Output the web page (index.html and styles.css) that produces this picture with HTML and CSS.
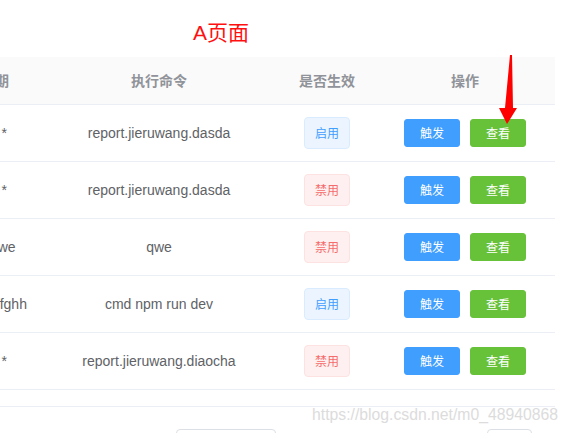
FILE: index.html
```html
<!DOCTYPE html>
<html lang="zh-CN">
<head>
<meta charset="utf-8">
<title>A页面</title>
<link rel="stylesheet" href="styles.css">
</head>
<body>
<div class="page">
  <div class="title">A页面</div>
  <div class="tbl-wrap">
    <table class="tbl">
      <colgroup>
        <col class="c1"><col class="c2"><col class="c3"><col class="c4">
      </colgroup>
      <thead>
        <tr><th>执行周期</th><th>执行命令</th><th>是否生效</th><th>操作</th></tr>
      </thead>
      <tbody>
        <tr>
          <td>* * * * * *</td><td>report.jieruwang.dasda</td>
          <td><span class="tag on">启用</span></td>
          <td><div class="ops"><button class="btn blue">触发</button><button class="btn green">查看</button></div></td>
        </tr>
        <tr>
          <td>* * * * * *</td><td>report.jieruwang.dasda</td>
          <td><span class="tag off">禁用</span></td>
          <td><div class="ops"><button class="btn blue">触发</button><button class="btn green">查看</button></div></td>
        </tr>
        <tr>
          <td>qwqweqwe</td><td>qwe</td>
          <td><span class="tag off">禁用</span></td>
          <td><div class="ops"><button class="btn blue">触发</button><button class="btn green">查看</button></div></td>
        </tr>
        <tr>
          <td>asdfghhsdfghh</td><td>cmd npm run dev</td>
          <td><span class="tag on">启用</span></td>
          <td><div class="ops"><button class="btn blue">触发</button><button class="btn green">查看</button></div></td>
        </tr>
        <tr>
          <td>* * * * * *</td><td>report.jieruwang.diaocha</td>
          <td><span class="tag off">禁用</span></td>
          <td><div class="ops"><button class="btn blue">触发</button><button class="btn green">查看</button></div></td>
        </tr>
      </tbody>
    </table>
    <div class="scroll-space"></div>
  </div>
  <div class="pager">
    <div class="pbox wide"></div>
    <div class="pbox small"></div>
  </div>
  <div class="watermark">https://blog.csdn.net/m0_48940868</div>
  <svg class="arrow" width="30" height="80" viewBox="495 50 30 80">
    <polygon points="510,55 512,55 513,108 517,108 507,124 499,108 505,108" fill="#ff0000"/>
  </svg>
</div>
</body>
</html>
```
FILE: styles.css
```css
* { box-sizing: border-box; }
html, body { margin: 0; padding: 0; background: #fff; }
body {
  font-family: "Liberation Sans", "Noto Sans CJK SC", sans-serif;
  font-size: 14px;
  color: #606266;
  overflow: hidden;
  width: 568px;
  height: 433px;
}
.page { position: relative; width: 568px; height: 433px; overflow: hidden; }
.title {
  height: 57px;
  padding: 21px 0 0 193px;
  font-size: 21px;
  line-height: 24px;
  color: #ff1010;
  font-family: "Liberation Sans", "Noto Sans CJK SC", sans-serif;
}
.tbl-wrap { width: 555px; overflow: hidden; }
.tbl {
  margin-left: -77px;
  width: 632px;
  table-layout: fixed;
  border-collapse: collapse;
  border-spacing: 0;
}
.c1 { width: 116px; }
.c2 { width: 240px; }
.c3 { width: 96px; }
.c4 { width: 180px; }
.tbl th {
  background: #fafafa;
  color: #909399;
  font-weight: bold;
  font-family: "Noto Sans CJK SC", sans-serif;
  font-size: 14px;
  line-height: 23px;
  padding: 12px 0;
  border-bottom: 1px solid #ebeef5;
  text-align: center;
  white-space: nowrap;
}
.tbl td {
  padding: 12px 0;
  height: 57px;
  line-height: 23px;
  border-bottom: 1px solid #ebeef5;
  text-align: center;
  vertical-align: middle;
  white-space: nowrap;
}
.tag {
  display: inline-block;
  height: 32px;
  line-height: 30px;
  padding: 0 10px;
  font-size: 12px;
  border: 1px solid;
  border-radius: 4px;
  font-family: "Noto Sans CJK SC", sans-serif;
  vertical-align: middle;
}
.tag.on { background: #ecf5ff; border-color: #d9ecff; color: #409eff; }
.tag.off { background: #fef0f0; border-color: #fde2e2; color: #f56c6c; }
.ops { display: flex; justify-content: center; gap: 10px; }
.btn {
  width: 56px;
  height: 28px;
  padding: 0;
  border: 1px solid;
  border-radius: 3px;
  color: #fff;
  font-size: 12px;
  font-family: "Noto Sans CJK SC", sans-serif;
  line-height: 26px;
}
.btn.blue { background: #409eff; border-color: #409eff; }
.btn.green { background: #67c23a; border-color: #67c23a; }
.scroll-space { height: 17px; border-bottom: 1px solid #ebeef5; }
.pager { display: flex; padding-left: 176px; margin-top: 22px; }
.pbox { height: 28px; border: 1px solid #dcdfe6; border-radius: 4px; background: #fff; }
.pbox.wide { width: 100px; }
.pbox.small { width: 45px; margin-left: 211px; }
.watermark {
  position: absolute;
  left: 312px;
  top: 405px;
  font-size: 15.75px;
  line-height: 20px;
  color: #dcdcdc;
  font-family: "Liberation Sans", sans-serif;
  white-space: nowrap;
}
.arrow { position: absolute; left: 495px; top: 50px; }
```
